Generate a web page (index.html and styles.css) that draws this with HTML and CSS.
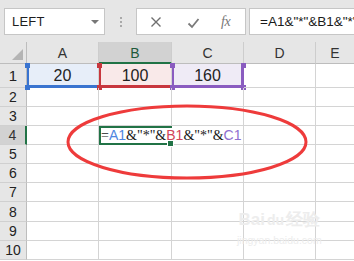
FILE: index.html
```html
<!DOCTYPE html>
<html>
<head>
<meta charset="utf-8">
<link rel="stylesheet" href="styles.css">
</head>
<body>
<div class="app">
  <div class="toolbar">
    <div class="namebox">
      <span class="name">LEFT</span>
      <span class="caret"></span>
    </div>
    <div class="grip"><i></i><i></i><i></i></div>
    <div class="buttons">
      <svg class="btn-x" width="12" height="12" viewBox="0 0 12 12"><path d="M1.5 1.5 L10.5 10.5 M10.5 1.5 L1.5 10.5" stroke="#6f6f6f" stroke-width="1.4" fill="none"/></svg>
      <svg class="btn-ok" width="13" height="12" viewBox="0 0 13 12"><path d="M1.5 6.5 L5 10 L11.5 2" stroke="#7a7a7a" stroke-width="1.8" fill="none"/></svg>
      <span class="fx">fx</span>
    </div>
    <div class="formula">=A1&amp;"*"&amp;B1&amp;"*"&amp;C1</div>
  </div>
  <div class="sheet">
    <div class="corner"><span class="tri"></span></div>
    <div class="colh">A</div>
    <div class="colh sel">B</div>
    <div class="colh">C</div>
    <div class="colh">D</div>
    <div class="colh last">E</div>

    <div class="rowh tall">1</div>
    <div class="cell tall ref-a">20<i class="hd tl"></i><i class="hd bl"></i></div>
    <div class="cell tall ref-b">100<i class="hd tl"></i><i class="hd bl"></i></div>
    <div class="cell tall ref-c">160<i class="hd tl"></i><i class="hd bl"></i><i class="hd tr"></i><i class="hd br"></i></div>
    <div class="cell tall"></div>
    <div class="cell tall last"></div>

    <div class="rowh">2</div><div class="cell"></div><div class="cell"></div><div class="cell"></div><div class="cell"></div><div class="cell last"></div>
    <div class="rowh">3</div><div class="cell"></div><div class="cell"></div><div class="cell"></div><div class="cell"></div><div class="cell last"></div>
    <div class="rowh sel">4</div>
    <div class="cell"></div>
    <div class="cell active"><span class="edit">=<b class="ca">A1</b>&amp;"*"&amp;<b class="cb">B1</b>&amp;"*"&amp;<b class="cc">C1</b></span><i class="handle"></i></div>
    <div class="cell"></div><div class="cell"></div><div class="cell last"></div>
    <div class="rowh">5</div><div class="cell"></div><div class="cell"></div><div class="cell"></div><div class="cell"></div><div class="cell last"></div>
    <div class="rowh">6</div><div class="cell"></div><div class="cell"></div><div class="cell"></div><div class="cell"></div><div class="cell last"></div>
    <div class="rowh">7</div><div class="cell"></div><div class="cell"></div><div class="cell"></div><div class="cell"></div><div class="cell last"></div>
    <div class="rowh">8</div><div class="cell"></div><div class="cell"></div><div class="cell"></div><div class="cell"></div><div class="cell last"></div>
    <div class="rowh">9</div><div class="cell"></div><div class="cell"></div><div class="cell"></div><div class="cell"></div><div class="cell last"></div>
    <div class="rowh">10</div><div class="cell"></div><div class="cell"></div><div class="cell"></div><div class="cell"></div><div class="cell last"></div>

    <svg class="ring" width="250" height="82" viewBox="0 0 250 82"><ellipse cx="125" cy="41" rx="119" ry="36" fill="none" stroke="#ee3b3b" stroke-width="3"/></svg>
    <div class="watermark"><span class="wm-big">Bai<span class="paw">du</span>经验</span><span class="wm-small">jingyan.baidu.com</span></div>
  </div>
</div>
</body>
</html>
```
FILE: styles.css
```css
* { box-sizing: border-box; }
html, body { margin: 0; padding: 0; background: #fff; }
body { font-family: "Liberation Sans", Arial, sans-serif; width: 354px; height: 261px; overflow: hidden; }

.app { width: 354px; height: 261px; overflow: hidden; }

.toolbar {
  height: 42px;
  background: #e6e6e6;
  display: flex;
  align-items: flex-start;
  padding: 8px 0 0 4px;
}
.namebox {
  width: 101px;
  height: 27px;
  background: #fff;
  border: 1px solid #c6c6c6;
  display: flex;
  align-items: center;
  justify-content: space-between;
  padding: 0 5px 0 7px;
}
.name { font-size: 13px; color: #1e1e1e; letter-spacing: 0.2px; }
.caret {
  width: 0; height: 0;
  border-left: 4px solid transparent;
  border-right: 4px solid transparent;
  border-top: 4px solid #777;
}
.grip {
  width: 31px;
  height: 27px;
  display: flex;
  flex-direction: column;
  align-items: center;
  justify-content: center;
  gap: 2px;
}
.grip i { display: block; width: 2px; height: 2px; background: #a9a9a9; }
.buttons {
  width: 110px;
  height: 27px;
  background: #fff;
  border: 1px solid #c6c6c6;
  display: flex;
  align-items: center;
  padding-left: 13px;
}
.btn-x { margin-right: 25px; }
.btn-ok { margin-right: 21px; margin-top: 2px; }
.fx { font-family: "Liberation Serif", serif; font-style: italic; font-size: 14px; color: #777; letter-spacing: -0.5px; }
.formula {
  margin-left: 3px;
  flex: 1;
  min-width: 0;
  height: 27px;
  background: #fff;
  border: 1px solid #c6c6c6;
  border-right: none;
  font-size: 13.5px;
  color: #1a1a1a;
  white-space: nowrap;
  overflow: hidden;
  line-height: 25px;
  padding-left: 10px;
}

.sheet {
  position: relative;
  display: grid;
  grid-template-columns: 27px 72px 73px 72px 72px 1fr;
  grid-template-rows: 22px 24px 19px 19px 19px 19px 19px 19px 20px 19px 19px;
}
.corner {
  background: #e6e6e6;
  border-right: 1px solid #bdbdbd;
  border-bottom: 1px solid #bdbdbd;
  position: relative;
}
.tri {
  position: absolute;
  right: 3px;
  bottom: 3px;
  width: 0; height: 0;
  border-left: 11px solid transparent;
  border-bottom: 11px solid #b4b4b4;
}
.colh {
  background: #e6e6e6;
  border-right: 1px solid #cdcdcd;
  border-bottom: 1px solid #bdbdbd;
  font-size: 14px;
  color: #333;
  display: flex;
  align-items: center;
  justify-content: center;
  padding-top: 1px;
}
.colh.sel { background: #d2d2d2; color: #1f5a3a; border-bottom: 2px solid #217346; }
.colh.last { border-right: none; }
.rowh {
  background: #e6e6e6;
  border-right: 1px solid #bdbdbd;
  border-bottom: 1px solid #d0d0d0;
  font-size: 14px;
  color: #222;
  display: flex;
  align-items: center;
  justify-content: center;
}
.rowh.tall { font-size: 15px; }
.rowh.sel { background: #d2d2d2; border-right: 2px solid #217346; color: #333; }
.cell {
  position: relative;
  border-right: 1px solid #d4d4d4;
  border-bottom: 1px solid #d4d4d4;
  font-size: 16px;
  color: #222;
  display: flex;
  align-items: center;
  justify-content: center;
}
.cell.last { border-right: none; }
.ref-a { background: #e7eef9; box-shadow: inset 2px 0 0 #3a74d0, inset 0 -2px 0 #3a74d0; border-bottom-color: #3a74d0; }
.ref-b { background: #f9e9e9; box-shadow: inset 2px 0 0 #c8373e, inset 0 -2px 0 #c8373e; border-bottom-color: #c8373e; }
.ref-c { background: #efebf6; box-shadow: inset 2px 0 0 #8a5cc0, inset -2px 0 0 #8a5cc0, inset 0 -2px 0 #8a5cc0; border-bottom-color: #8a5cc0; border-right-color: #8a5cc0; }
.hd { position: absolute; width: 5px; height: 5px; display: block; }
.ref-a .hd { background: #3a74d0; }
.ref-b .hd { background: #c8373e; }
.ref-c .hd { background: #8a5cc0; }
.hd.tl { left: -2px; top: -1px; }
.hd.bl { left: -2px; bottom: -3px; }
.hd.tr { right: -3px; top: -1px; }
.hd.br { right: -3px; bottom: -3px; }

.active {
  justify-content: flex-start;
  box-shadow: inset 0 0 0 2px #217346;
  border-right-color: #217346;
  border-bottom-color: #217346;
  overflow: visible;
  z-index: 2;
}
.edit {
  position: relative;
  z-index: 1;
  background: #fff;
  margin-left: 2px;
  font-family: "Liberation Serif", "Times New Roman", serif;
  font-size: 14px;
  line-height: 15px;
  color: #1a1a1a;
  white-space: nowrap;
}
.edit b { font-weight: normal; font-family: "Liberation Sans", Arial, sans-serif; font-size: 14px; }
.ca { color: #4f86e0; }
.cb { color: #d2455a; }
.cc { color: #8e6fd0; }
.handle {
  position: absolute;
  right: -3px;
  bottom: -3px;
  width: 5px;
  height: 5px;
  background: #217346;
  border: 1px solid #fff;
  box-sizing: content-box;
  z-index: 2;
}

.ring {
  position: absolute;
  left: 62px;
  top: 59px;
  z-index: 5;
  pointer-events: none;
}
.watermark {
  position: absolute;
  left: 237px;
  top: 166px;
  display: flex;
  flex-direction: column;
  align-items: center;
  color: #ededed;
  pointer-events: none;
  z-index: 4;
}
.wm-big { font-size: 17px; font-weight: bold; letter-spacing: 0; }
.paw { font-size: 14px; margin: 0 2px; }
.wm-small { font-size: 10.5px; margin-top: 3px; }
```
